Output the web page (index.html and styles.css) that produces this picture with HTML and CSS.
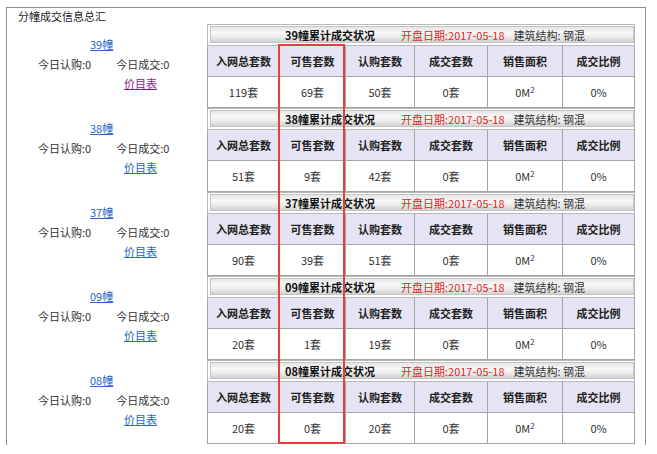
FILE: index.html
```html
<!DOCTYPE html>
<html lang="zh">
<head>
<meta charset="utf-8">
<title>分幢成交信息总汇</title>
<link rel="stylesheet" href="styles.css">
</head>
<body>
<div class="page">
  <div class="heading">分幢成交信息总汇</div>
  <div class="rows">
    <div class="row">
      <div class="info">
        <div class="line bld"><a href="#" class="link">39幢</a></div>
        <div class="line today"><span class="sub">今日认购:0</span><span class="deal">今日成交:0</span></div>
        <div class="line price"><a href="#" class="link visited">价目表</a></div>
      </div>
      <table class="stat">
        <colgroup><col class="c1"><col class="c2"><col class="c3"><col class="c4"><col class="c5"><col class="c6"></colgroup>
        <tr class="caprow"><td colspan="6"><div class="cap"><b class="ttl">39幢累计成交状况</b><span class="date">开盘日期:2017-05-18</span><span class="struct">建筑结构: 钢混</span></div></td></tr>
        <tr class="head"><th>入网总套数</th><th>可售套数</th><th>认购套数</th><th>成交套数</th><th>销售面积</th><th>成交比例</th></tr>
        <tr class="data"><td>119套</td><td>69套</td><td>50套</td><td>0套</td><td>0M<sup>2</sup></td><td>0%</td></tr>
      </table>
    </div>
    <div class="row">
      <div class="info">
        <div class="line bld"><a href="#" class="link">38幢</a></div>
        <div class="line today"><span class="sub">今日认购:0</span><span class="deal">今日成交:0</span></div>
        <div class="line price"><a href="#" class="link">价目表</a></div>
      </div>
      <table class="stat">
        <colgroup><col class="c1"><col class="c2"><col class="c3"><col class="c4"><col class="c5"><col class="c6"></colgroup>
        <tr class="caprow"><td colspan="6"><div class="cap"><b class="ttl">38幢累计成交状况</b><span class="date">开盘日期:2017-05-18</span><span class="struct">建筑结构: 钢混</span></div></td></tr>
        <tr class="head"><th>入网总套数</th><th>可售套数</th><th>认购套数</th><th>成交套数</th><th>销售面积</th><th>成交比例</th></tr>
        <tr class="data"><td>51套</td><td>9套</td><td>42套</td><td>0套</td><td>0M<sup>2</sup></td><td>0%</td></tr>
      </table>
    </div>
    <div class="row">
      <div class="info">
        <div class="line bld"><a href="#" class="link">37幢</a></div>
        <div class="line today"><span class="sub">今日认购:0</span><span class="deal">今日成交:0</span></div>
        <div class="line price"><a href="#" class="link">价目表</a></div>
      </div>
      <table class="stat">
        <colgroup><col class="c1"><col class="c2"><col class="c3"><col class="c4"><col class="c5"><col class="c6"></colgroup>
        <tr class="caprow"><td colspan="6"><div class="cap"><b class="ttl">37幢累计成交状况</b><span class="date">开盘日期:2017-05-18</span><span class="struct">建筑结构: 钢混</span></div></td></tr>
        <tr class="head"><th>入网总套数</th><th>可售套数</th><th>认购套数</th><th>成交套数</th><th>销售面积</th><th>成交比例</th></tr>
        <tr class="data"><td>90套</td><td>39套</td><td>51套</td><td>0套</td><td>0M<sup>2</sup></td><td>0%</td></tr>
      </table>
    </div>
    <div class="row">
      <div class="info">
        <div class="line bld"><a href="#" class="link">09幢</a></div>
        <div class="line today"><span class="sub">今日认购:0</span><span class="deal">今日成交:0</span></div>
        <div class="line price"><a href="#" class="link">价目表</a></div>
      </div>
      <table class="stat">
        <colgroup><col class="c1"><col class="c2"><col class="c3"><col class="c4"><col class="c5"><col class="c6"></colgroup>
        <tr class="caprow"><td colspan="6"><div class="cap"><b class="ttl">09幢累计成交状况</b><span class="date">开盘日期:2017-05-18</span><span class="struct">建筑结构: 钢混</span></div></td></tr>
        <tr class="head"><th>入网总套数</th><th>可售套数</th><th>认购套数</th><th>成交套数</th><th>销售面积</th><th>成交比例</th></tr>
        <tr class="data"><td>20套</td><td>1套</td><td>19套</td><td>0套</td><td>0M<sup>2</sup></td><td>0%</td></tr>
      </table>
    </div>
    <div class="row">
      <div class="info">
        <div class="line bld"><a href="#" class="link">08幢</a></div>
        <div class="line today"><span class="sub">今日认购:0</span><span class="deal">今日成交:0</span></div>
        <div class="line price"><a href="#" class="link">价目表</a></div>
      </div>
      <table class="stat">
        <colgroup><col class="c1"><col class="c2"><col class="c3"><col class="c4"><col class="c5"><col class="c6"></colgroup>
        <tr class="caprow"><td colspan="6"><div class="cap"><b class="ttl">08幢累计成交状况</b><span class="date">开盘日期:2017-05-18</span><span class="struct">建筑结构: 钢混</span></div></td></tr>
        <tr class="head"><th>入网总套数</th><th>可售套数</th><th>认购套数</th><th>成交套数</th><th>销售面积</th><th>成交比例</th></tr>
        <tr class="data"><td>20套</td><td>0套</td><td>20套</td><td>0套</td><td>0M<sup>2</sup></td><td>0%</td></tr>
      </table>
    </div>
  </div>
  <div class="highlight"></div>
</div>
</body>
</html>
```
FILE: styles.css
```css
html, body {
  margin: 0;
  padding: 0;
  background: #ffffff;
}
body {
  font-family: "Noto Sans CJK SC", "Liberation Sans", sans-serif;
  font-size: 11px;
  color: #222;
}
.page {
  position: relative;
  box-sizing: border-box;
  margin: 7px 0 0 6px;
  width: 640px;
  height: 438px;
  border: 1px solid #8c8c8c;
  border-bottom: none;
}
.heading {
  height: 16px;
  line-height: 16px;
  padding-left: 11px;
  color: #222;
}
.rows {
  display: flex;
  flex-direction: column;
}
.row {
  display: flex;
  height: 84px;
  flex: none;
}
.info {
  width: 200px;
  flex: none;
  padding-top: 11px;
  box-sizing: border-box;
}
.line {
  height: 19.5px;
  line-height: 19.5px;
  white-space: nowrap;
}
.bld {
  padding-left: 83px;
}
.today {
  display: flex;
  padding-left: 31px;
  color: #333;
}
.deal {
  margin-left: 25px;
}
.price {
  padding-left: 117px;
}
.link {
  color: #2a66c4;
  text-decoration: underline;
}
.link.visited {
  color: #8a1a8a;
}
.stat {
  width: 427px;
  height: 84px;
  border-collapse: collapse;
  table-layout: fixed;
  flex: none;
  align-self: flex-start;
}
.c1 { width: 72px; }
.c2 { width: 66px; }
.c3 { width: 69px; }
.c4 { width: 73px; }
.c5 { width: 75px; }
.c6 { width: 72px; }
.stat td, .stat th {
  border: 1px solid #a4a4a4;
  text-align: center;
  padding: 0;
  line-height: 12px;
}
.caprow {
  height: 20px;
}
.caprow td {
  padding: 1px 0 0 2px;
  border-color: #b8b8b8;
  vertical-align: top;
}
.cap {
  height: 17px;
  box-sizing: border-box;
  border: 1px solid #c4c4c4;
  background: linear-gradient(#e4e4e4 0%, #f8f8f8 35%, #ececec 65%, #d2d2d2 100%);
  display: flex;
  align-items: center;
  padding-left: 74px;
  white-space: nowrap;
  text-align: left;
}
.ttl {
  font-weight: bold;
  color: #111;
}
.date {
  color: #e02828;
  margin-left: 26px;
}
.struct {
  margin-left: 9px;
  color: #333;
}
.head {
  height: 30px;
}
.head th {
  background: #e6e4f4;
  font-weight: bold;
  color: #222;
}
.data {
  height: 30px;
}
.data td {
  color: #333;
  background: #fff;
}
sup {
  font-size: 8px;
  line-height: 0;
  vertical-align: 4px;
}
.highlight {
  position: absolute;
  left: 271px;
  top: 36px;
  width: 67px;
  height: 400px;
  box-sizing: border-box;
  border: 2px solid #e2413b;
}
```
